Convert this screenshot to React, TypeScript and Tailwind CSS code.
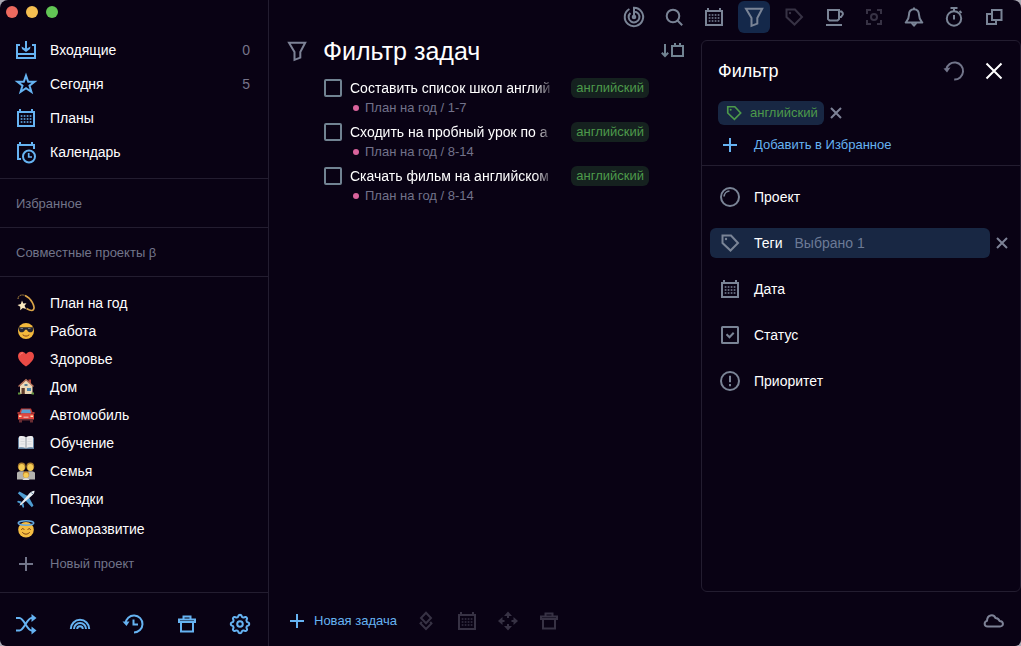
import { useState } from 'react'
import type { ReactNode } from 'react'
import clsx from 'clsx'
import { twMerge } from 'tailwind-merge'

type IconProps = { className?: string; strokeWidth?: number }

const Icon = ({ className, strokeWidth = 2, children }: IconProps & { children: ReactNode }) => (
  <svg
    viewBox="0 0 24 24"
    fill="none"
    stroke="currentColor"
    strokeWidth={strokeWidth}
    aria-hidden="true"
    className={twMerge('w-6 h-6 shrink-0', className)}
  >
    {children}
  </svg>
)

const InboxIcon = (p: IconProps) => (
  <Icon {...p}>
    <path d="M6 7H3v13h18V7h-3M3 16h18M12 3v8" />
    <path d="M7.5 8.500L12 11l4.500-2.500-.5 2.500-4 3-4-3z" fill="currentColor" stroke="none" />
  </Icon>
)

const StarIcon = (p: IconProps) => (
  <Icon {...p}>
    <path d="M12 3.600l2.200 6.200h6.300l-5 3.800 1.900 6.200-5.400-3.700-5.400 3.700 1.900-6.200-5-3.800h6.300z" />
  </Icon>
)

const CalendarIcon = (p: IconProps) => (
  <Icon {...p}>
    <path d="M4 6h16v14H4zM6 3v3M18 3v3" />
    <path d="M6.700 10h11M6.700 13h11M6.700 16h11" strokeWidth="1.700" strokeDasharray="1.700 1.300" />
  </Icon>
)

const CalendarClockIcon = (p: IconProps) => (
  <Icon {...p}>
    <path d="M7 19H4V5h16v4M6 2v3M18 2v3" />
    <circle cx="15" cy="16.500" r="6" />
    <path d="M14.700 13v4H18" strokeWidth="1.700" />
  </Icon>
)

const PlusIcon = (p: IconProps) => (
  <Icon {...p}>
    <path d="M12 5v14M5 12h14" />
  </Icon>
)

const ShuffleIcon = (p: IconProps) => (
  <Icon {...p}>
    <path d="M2 6h3.500c4.500 0 7.500 12.500 12 12.500H20M2 18.500h3.500C10 18.500 13 6 17.500 6H20" />
    <path d="M17.500 2l5 4-5 4zM17.500 14.500l5 4-5 4z" fill="currentColor" stroke="none" />
  </Icon>
)

const RainbowIcon = (p: IconProps) => (
  <Icon {...p}>
    <path d="M2.800 17a9.200 9.200 0 0 1 18.400 0M6 17a6 6 0 0 1 12 0M9.200 17a2.800 2.800 0 0 1 5.600 0" />
  </Icon>
)

const HistoryIcon = (p: IconProps) => (
  <Icon {...p}>
    <path d="M4.500 11.500a8.500 8.500 0 1 1 8.500 9M12.500 7.500v5H17" />
    <path d="M1.500 9.500h7l-3 4.500z" fill="currentColor" stroke="none" />
  </Icon>
)

const TrashIcon = (p: IconProps) => (
  <Icon {...p}>
    <path d="M6 10v9.500h12V10M4 7.500h16V10H4zM8.500 7.500v-3h7v3" />
  </Icon>
)

// eight rounded teeth around the hub
const gearPath =
  Array.from({ length: 96 }, (_, i) => {
    const angle = (i / 96) * Math.PI * 2
    const radius = 8.2 + Math.tanh(2 * Math.cos(angle * 8))
    return `${i ? 'L' : 'M'}${(12 + radius * Math.sin(angle)).toFixed(2)} ${(12 - radius * Math.cos(angle)).toFixed(2)}`
  }).join('') + 'z'

const GearIcon = (p: IconProps) => (
  <Icon {...p}>
    <path d={gearPath} strokeLinejoin="round" />
    <circle cx="12" cy="12" r="2.800" />
  </Icon>
)

const FunnelIcon = (p: IconProps) => (
  <Icon {...p}>
    <path d="M4 3.700h16.200l-4.900 9.300v5.600l-5.800 2.300V13z" />
  </Icon>
)

const SortIcon = () => (
  <svg
    viewBox="0 0 24 18"
    fill="none"
    stroke="currentColor"
    strokeWidth="2"
    aria-hidden="true"
    className="w-6 h-[18px] shrink-0"
  >
    <path d="M4 2v12M.8 10.800L4 14l3.200-3.200" />
    <path d="M11 4h11v10H11zM14 1v3M19 1v3" />
  </svg>
)

const TargetIcon = (p: IconProps) => (
  <Icon {...p}>
    <path d="M12 12V2.800a9.200 9.200 0 1 1-4.600 1.200M12 6.600a5.400 5.400 0 1 1-3.600 1.400" />
    <circle cx="12" cy="12" r="2.300" fill="currentColor" stroke="none" />
  </Icon>
)

const SearchIcon = (p: IconProps) => (
  <Icon {...p}>
    <circle cx="11" cy="11" r="6.300" />
    <path d="M15.500 15.500l4.700 4.700" />
  </Icon>
)

const TagIcon = (p: IconProps) => (
  <Icon {...p}>
    <path d="M4.500 4.500H13l7 7.500-7.500 7.500-8-7.500z" />
    <circle cx="8" cy="8" r="1.200" fill="currentColor" stroke="none" />
  </Icon>
)

const CupIcon = (p: IconProps) => (
  <Icon {...p}>
    <path d="M6 5h11v9l-1.500 1.500h-8L6 14zM17 6.500h2.500L20.800 8v1.500L19 12h-2M4 20h16" />
  </Icon>
)

const FocusIcon = (p: IconProps) => (
  <Icon {...p}>
    <path d="M9 5H5v4M15 5h4v4M9 19H5v-4M15 19h4v-4" />
    <circle cx="12" cy="12" r="3" />
  </Icon>
)

const BellIcon = (p: IconProps) => (
  <Icon {...p}>
    <path
      d="M12 4.200c-3.500 0-5 2.600-5 5.600 0 4.200-1.300 5.400-3.300 7.700h16.600c-2-2.300-3.300-3.500-3.300-7.700 0-3-1.500-5.600-5-5.600zM12 2.500v1.700M9.800 18l2.200 2.700 2.200-2.700"
      strokeLinejoin="round"
    />
  </Icon>
)

const TimerIcon = (p: IconProps) => (
  <Icon {...p}>
    <circle cx="12" cy="13.500" r="7.200" />
    <path d="M8.500 3h7M12 3v3M12 10v4.500M17.500 6l2 2" />
  </Icon>
)

const WindowsIcon = (p: IconProps) => (
  <Icon {...p}>
    <path d="M10 5h9.500v10H10zM10 9H5v10h9v-4" />
  </Icon>
)

const CloseIcon = (p: IconProps) => (
  <Icon {...p}>
    <path d="M4.500 4.500l15 15M19.500 4.500l-15 15" />
  </Icon>
)

const ResetIcon = (p: IconProps) => (
  <Icon {...p}>
    <path d="M4.200 10.500a8.500 8.500 0 1 1 8 10" />
    <path d="M1.500 9.500l7-1-3.500 5z" fill="currentColor" stroke="none" />
  </Icon>
)

const ProjectIcon = (p: IconProps) => (
  <Icon {...p}>
    <circle cx="12" cy="12" r="9" />
    <path d="M6 11.500A6 6 0 0 1 11.500 6" strokeWidth="1.700" />
  </Icon>
)

const StatusIcon = (p: IconProps) => (
  <Icon {...p}>
    <rect x="4" y="4" width="16" height="16" rx=".5" />
    <path d="M8.500 11.200l3 3 4.200-4.400" />
  </Icon>
)

const PriorityIcon = (p: IconProps) => (
  <Icon {...p}>
    <circle cx="12" cy="12" r="9" />
    <path d="M12 6.800v6.400M12 15v2.200" />
  </Icon>
)

const LayersIcon = (p: IconProps) => (
  <Icon {...p}>
    <path d="M12 3.700l5 5.300-5 5.300L7 9zM7.800 12.800L6.500 14.500l5.500 5.500 5.500-5.500-1.300-1.700" />
  </Icon>
)

const MoveIcon = (p: IconProps) => (
  <Icon {...p}>
    <path
      d="M12 2.500l4 4.500h-3v2h-2V7H8zM12 21.500L8 17h3v-2h2v2h3zM2 12l4.500-4v3h2v2h-2v3zM22 12l-4.500 4v-3h-2v-2h2V8z"
      fill="currentColor"
      stroke="none"
    />
  </Icon>
)

const CloudIcon = (p: IconProps) => (
  <Icon {...p}>
    <path
      d="M5.700 17.500c-4 0-3.900-4.800-.7-5.600.2-6.300 6.400-7.200 8.500-2.900 2.100.2 3.400 1.400 4 2.900 4.500.3 4.500 5.600.5 5.600z"
      strokeLinejoin="round"
    />
  </Icon>
)

const Emoji = ({ children }: { children: ReactNode }) => (
  <svg viewBox="0 0 18 18" fill="none" aria-hidden="true" className="w-[18px] h-[18px] mx-[3px] shrink-0">
    {children}
  </svg>
)

const emojis: Record<string, ReactNode> = {
  dizzy: (
    <Emoji>
      <path d="M1 5c0-5 6-5 10-2" stroke="#b98f41" strokeDasharray="1.500 .7" />
      <path d="M8 1.500c6 2.500 10.500 11 8.500 14-1 1.600-4 .8-7-1" stroke="#dba548" strokeWidth="1.700" />
      <path d="M5 6.500l1.300 3 3.200-.3-2 2.600 1.700 3.200-3.400-.9-2.600 2.200.1-3.500L.5 11l3.300-.9z" fill="#fbe9c0" />
    </Emoji>
  ),
  cool: (
    <Emoji>
      <circle cx="9" cy="9" r="8" fill="#f4b93c" />
      <path d="M1.500 5.300h15l-.5 3.200c-.8 2.600-5 2.600-6-.8h-2c-1 3.400-5.200 3.400-6 .8z" fill="#262733" />
      <path d="M3.500 6.500H6M11 6.500h2.500" stroke="#6f7887" />
      <path d="M6 13c2 1.600 4 1.600 6 0" stroke="#81451a" strokeLinecap="round" />
    </Emoji>
  ),
  heart: (
    <Emoji>
      <path d="M9 16.500C4 12.800 1 9.500 1 5.900 1 1 7.200.2 9 4.200 10.800.2 17 1 17 5.900c0 3.600-3 6.900-8 10.600z" fill="#ea4a45" />
      <path d="M3 5c.3-1.500 1.500-2 2.500-2" stroke="#ff837a" strokeLinecap="round" />
    </Emoji>
  ),
  house: (
    <Emoji>
      <path d="M11.500 1.500H14v5h-2.500z" fill="#b5463a" />
      <path d="M3 7.500L9 2l6.500 5.500V16H3z" fill="#ecd9b8" />
      <path d="M1.500 8.500L9 1.800l7.500 6.700" stroke="#b8755c" strokeWidth="1.500" />
      <path d="M4.500 10h3.300v6H4.500z" fill="#5e3c2b" />
      <path d="M10 10h4v3h-4z" fill="#4b86ad" />
      <path d="M7.500 6h3v2h-3z" fill="#577e94" />
      <path d="M1 14.500h2.500v2H1zM14.500 14.500H17v2h-2.500z" fill="#61953d" />
    </Emoji>
  ),
  car: (
    <Emoji>
      <path d="M4 2.500h10l2 5H2z" fill="#c93d36" />
      <path d="M5 3.500h8l1.200 4H3.800z" fill="#5b9fd0" />
      <path d="M1 8.500c2-1.800 14-1.800 16 0v5H1z" fill="#e0483f" />
      <path d="M.5 7h2M15.500 7h2" stroke="#e0483f" strokeWidth="1.500" />
      <path d="M2 13h14v1.500H2zM2 14h3v2.500H2zM13 14h3v2.500h-3z" fill="#6b2d33" />
      <path d="M2 9.500h2.500V11H2zM13.500 9.500H16V11h-2.500z" fill="#ffe3b0" />
      <path d="M6.500 10.500h5V12h-5z" fill="#e9a49c" />
    </Emoji>
  ),
  book: (
    <Emoji>
      <path d="M1 3.500h16V15H1z" fill="#62809e" />
      <path d="M2 2.500c3-.8 5-.4 7 .8v11c-2-1-4-1.300-7-.7zM16 2.500c-3-.8-5-.4-7 .8v11c2-1 4-1.300 7-.7z" fill="#ededee" />
      <path d="M9 3v11.500" stroke="#8f969f" />
      <path d="M3.500 5h4M3.500 7.500h4M3.500 10h4M10.500 5h4M10.500 7.500h4M10.500 10h4" stroke="#cfd1d6" strokeWidth=".7" />
    </Emoji>
  ),
  family: (
    <Emoji>
      <path d="M0 17.500V11c0-2.500 9-2.500 9 0 0-2.500 9-2.500 9 0v6.500z" fill="#b3b2ae" />
      <circle cx="4.700" cy="4.500" r="3.900" fill="#a97b2d" />
      <circle cx="13.300" cy="4.500" r="3.900" fill="#a97b2d" />
      <ellipse cx="4.700" cy="5.500" rx="3" ry="3.500" fill="#f5cc55" />
      <ellipse cx="13.300" cy="5.500" rx="3" ry="3.500" fill="#f5cc55" />
      <circle cx="9" cy="12.500" r="3.200" fill="#c98e36" />
      <circle cx="9" cy="13.200" r="2.500" fill="#f5cc55" />
      <path d="M5.500 18c.5-2.500 6.500-2.500 7 0z" fill="#deddd8" />
    </Emoji>
  ),
  plane: (
    <Emoji>
      <path d="M11.500 6.500L2.500 1.500.8 3.200l7 6.500zM11.500 6.500l5 9-1.700 1.700-6.500-7z" fill="#4d9cd1" />
      <path d="M4.500 11.500L1 10.800l-1 1.200 4 2zM6.500 13.500l.7 3.500-1.200 1-2-4z" fill="#4d9cd1" />
      <path d="M2.500 15.700l1-2.200L12.500 3.300C14 1.700 16 .5 17.500.7c.3 1.500-1 3.500-2.700 5L4.700 14.500z" fill="#e7edf2" />
      <path d="M14.300 2.500l1.400 1.400" stroke="#355c7e" />
    </Emoji>
  ),
  angel: (
    <Emoji>
      <circle cx="9" cy="9.700" r="7.800" fill="#f5bd42" />
      <ellipse cx="9" cy="3" rx="7.800" ry="2.200" stroke="#65a8de" strokeWidth="1.500" />
      <path d="M4.500 9.500c.6-1.400 2-1.400 2.600 0M10.900 9.500c.6-1.400 2-1.400 2.600 0M5.500 12.500c1.800 2.300 5.200 2.300 7 0" stroke="#7c4415" strokeLinecap="round" />
    </Emoji>
  ),
}

const views = [
  { title: 'Входящие', icon: InboxIcon, count: 0 },
  { title: 'Сегодня', icon: StarIcon, count: 5 },
  { title: 'Планы', icon: CalendarIcon },
  { title: 'Календарь', icon: CalendarClockIcon },
]

const projects = [
  { title: 'План на год', emoji: 'dizzy' },
  { title: 'Работа', emoji: 'cool' },
  { title: 'Здоровье', emoji: 'heart' },
  { title: 'Дом', emoji: 'house' },
  { title: 'Автомобиль', emoji: 'car' },
  { title: 'Обучение', emoji: 'book' },
  { title: 'Семья', emoji: 'family' },
  { title: 'Поездки', emoji: 'plane' },
]

const sidebarActions = [
  { label: 'Случайная задача', icon: ShuffleIcon },
  { label: 'Радуга', icon: RainbowIcon },
  { label: 'История', icon: HistoryIcon },
  { label: 'Корзина', icon: TrashIcon },
  { label: 'Настройки', icon: GearIcon },
]

const toolbar = [
  { label: 'Цели', icon: TargetIcon },
  { label: 'Поиск', icon: SearchIcon },
  { label: 'Календарь', icon: CalendarIcon },
  { label: 'Фильтр', icon: FunnelIcon, active: true },
  { label: 'Теги', icon: TagIcon, disabled: true },
  { label: 'Перерыв', icon: CupIcon },
  { label: 'Фокус', icon: FocusIcon, disabled: true },
  { label: 'Уведомления', icon: BellIcon },
  { label: 'Таймер', icon: TimerIcon },
  { label: 'Окна', icon: WindowsIcon },
]

const initialTasks = [
  { id: 1, title: 'Составить список школ англий', path: 'План на год / 1-7', done: false },
  { id: 2, title: 'Сходить на пробный урок по а', path: 'План на год / 8-14', done: false },
  { id: 3, title: 'Скачать фильм на английском', path: 'План на год / 8-14', done: false },
]

const taskActions = [
  { label: 'Сложить', icon: LayersIcon },
  { label: 'Назначить дату', icon: CalendarIcon },
  { label: 'Переместить', icon: MoveIcon },
  { label: 'Удалить', icon: TrashIcon },
]

const filters = [
  { title: 'Проект', icon: ProjectIcon },
  { title: 'Теги', icon: TagIcon, note: 'Выбрано 1' },
  { title: 'Дата', icon: CalendarIcon },
  { title: 'Статус', icon: StatusIcon },
  { title: 'Приоритет', icon: PriorityIcon },
]

const Sidebar = () => (
  <aside className="w-[269px] shrink-0 flex flex-col border-r border-[#231d30]">
    <div className="flex gap-2 px-1.5 pt-1.5 pb-[15px]">
      <span className="w-3 h-3 rounded-full bg-[#ed6a5f]" />
      <span className="w-3 h-3 rounded-full bg-[#f5bf50]" />
      <span className="w-3 h-3 rounded-full bg-[#62c655]" />
    </div>

    <nav className="pb-[9px] border-b border-[#231d30]">
      {views.map(({ title, icon: ViewIcon, count }) => (
        <a key={title} href="#" className="flex items-center gap-3 h-[34px] pl-3.5 pr-[18px] text-sm">
          <ViewIcon className="text-[#66b3f2]" />
          <span className="flex-1">{title}</span>
          {count !== undefined && <span className="text-[#77748a]">{count}</span>}
        </a>
      ))}
    </nav>

    <h2 className="h-[49px] px-4 leading-[50px] text-[13px] text-[#72758a] border-b border-[#231d30]">Избранное</h2>
    <h2 className="h-[49px] px-4 leading-[50px] text-[13px] text-[#72758a] border-b border-[#231d30]">
      Совместные проекты β
    </h2>

    <nav className="flex-1 pt-3 text-sm">
      {projects.map((project) => (
        <a key={project.title} href="#" className="flex items-center gap-3 h-7 px-3.5">
          {emojis[project.emoji]}
          {project.title}
        </a>
      ))}
      <a href="#" className="flex items-center gap-3 h-7 mt-0.5 px-3.5">
        {emojis.angel}
        Саморазвитие
      </a>
      <button type="button" className="flex items-center gap-3 h-7 mt-[7px] px-3.5 text-[13px] text-[#72758a]">
        <PlusIcon />
        Новый проект
      </button>
    </nav>

    <div className="flex justify-between pt-[19px] pb-2.5 pl-3.5 pr-4 border-t border-[#231d30] text-[#66b3f2]">
      {sidebarActions.map(({ label, icon: ActionIcon }) => (
        <button key={label} type="button" aria-label={label}>
          <ActionIcon />
        </button>
      ))}
    </div>
  </aside>
)

const TaskList = () => {
  const [tasks, setTasks] = useState(initialTasks)

  const toggle = (id: number) => {
    setTasks(tasks.map((t) => (t.id === id ? { ...t, done: !t.done } : t)))
  }

  return (
    <main className="flex-1 min-w-0 px-4">
      <div className="flex items-center gap-3.5">
        <FunnelIcon className="text-[#7d8296]" />
        <h1 className="flex-1 text-[25px] leading-6 font-normal">Фильтр задач</h1>
        <button type="button" aria-label="Сортировка" className="text-[#718392]">
          <SortIcon />
        </button>
      </div>

      <ul className="mt-3.5 pl-[39px] pr-9">
        {tasks.map((task) => (
          <li key={task.id} className="flex gap-2 h-11">
            <input
              type="checkbox"
              id={`task-${task.id}`}
              checked={task.done}
              onChange={() => toggle(task.id)}
              className="appearance-none w-[18px] h-[18px] mt-0.5 shrink-0 border-2 border-[#718392] rounded-xs checked:bg-[#718392]"
            />
            <div className="flex-1 min-w-0">
              <div className="flex items-center gap-4 h-[22px]">
                <label
                  htmlFor={`task-${task.id}`}
                  className="flex-1 min-w-0 overflow-hidden whitespace-nowrap text-sm [mask-image:linear-gradient(to_right,black_calc(100%-20px),transparent)]"
                >
                  {task.title}
                </label>
                <span className="h-5 px-[5px] rounded-md bg-[#15211f] text-[#4d9a4b] text-[13px] leading-5">
                  английский
                </span>
              </div>
              <p className="flex items-center gap-1.5 pl-[3px] text-[13px] leading-[18px] text-[#72728a]">
                <span className="w-1.5 h-1.5 rounded-full bg-[#d9639c]" />
                {task.path}
              </p>
            </div>
          </li>
        ))}
      </ul>
    </main>
  )
}

const FilterPanel = () => (
  <aside className="w-80 shrink-0 mt-px border border-[#231d30] rounded-md">
    <div className="px-4 pt-3.5 pb-2 border-b border-[#231d30]">
      <div className="flex items-center h-8 -mr-2.5">
        <h2 className="flex-1 text-lg font-normal">Фильтр</h2>
        <button type="button" aria-label="Сбросить" className="w-10 flex justify-center text-[#72758a]">
          <ResetIcon />
        </button>
        <button type="button" aria-label="Закрыть" className="w-10 flex justify-center">
          <CloseIcon />
        </button>
      </div>

      <div className="flex items-center mt-3.5">
        <span className="flex items-center gap-1.5 h-6 px-1.5 rounded-md bg-[#182743] text-[#4d9a4b] text-[13px]">
          <TagIcon className="w-5 h-5" />
          английский
        </span>
        <button type="button" aria-label="Убрать тег" className="w-6 flex justify-center text-[#7d8296]">
          <CloseIcon className="w-4 h-4" strokeWidth={3} />
        </button>
      </div>

      <button type="button" className="flex items-center gap-3 h-6 mt-2 text-[13px] text-[#66b3f2]">
        <PlusIcon />
        Добавить в Избранное
      </button>
    </div>

    <ul className="flex flex-col gap-4 py-4 pl-2 pr-1.5">
      {filters.map(({ title, icon: FilterIcon, note }) => (
        <li key={title} className="flex items-center">
          <button
            type="button"
            className={clsx(
              'flex-1 flex items-center gap-3 h-[30px] px-2 rounded-md text-left text-sm',
              note && 'bg-[#182743]',
            )}
          >
            <FilterIcon className="text-[#7a8496]" />
            {title}
            {note && <span className="text-[#6c7a96]">{note}</span>}
          </button>
          <div className="w-6 flex justify-center">
            {note && (
              <button type="button" aria-label="Очистить" className="text-[#7d8296]">
                <CloseIcon className="w-4 h-4" strokeWidth={3} />
              </button>
            )}
          </div>
        </li>
      ))}
    </ul>
  </aside>
)

const App = () => {
  return (
    <div className="bg-[#a9a8b3]">
      <div className="min-h-screen flex rounded-t-lg rounded-b-md bg-[#090214] text-white font-['Liberation_Sans',sans-serif]">
        <Sidebar />

        <div className="flex-1 min-w-0 flex flex-col">
          <div className="flex justify-end gap-2 h-[39px] pt-px pr-[11px]">
            {toolbar.map(({ label, icon: ToolIcon, active, disabled }) => (
              <button
                key={label}
                type="button"
                aria-label={label}
                disabled={disabled}
                className={clsx(
                  'w-8 h-8 flex items-center justify-center rounded-md',
                  active && 'bg-[#14284a]',
                  disabled ? 'text-[#373244]' : 'text-[#7a8496]',
                )}
              >
                <ToolIcon />
              </button>
            ))}
          </div>

          <div className="flex-1 flex">
            <TaskList />
            <FilterPanel />
          </div>

          <div className="flex items-center gap-[17px] pt-[17px] pb-[13px] pl-4 pr-[15px] text-[#373244]">
            <button type="button" className="flex items-center gap-[5px] text-[13px] text-[#66b3f2]">
              <PlusIcon />
              Новая задача
            </button>
            {taskActions.map(({ label, icon: ActionIcon }) => (
              <button key={label} type="button" aria-label={label} disabled>
                <ActionIcon />
              </button>
            ))}
            <button type="button" aria-label="Синхронизация" className="ml-auto text-[#7d8296]">
              <CloudIcon />
            </button>
          </div>
        </div>
      </div>
    </div>
  )
}

export default App
